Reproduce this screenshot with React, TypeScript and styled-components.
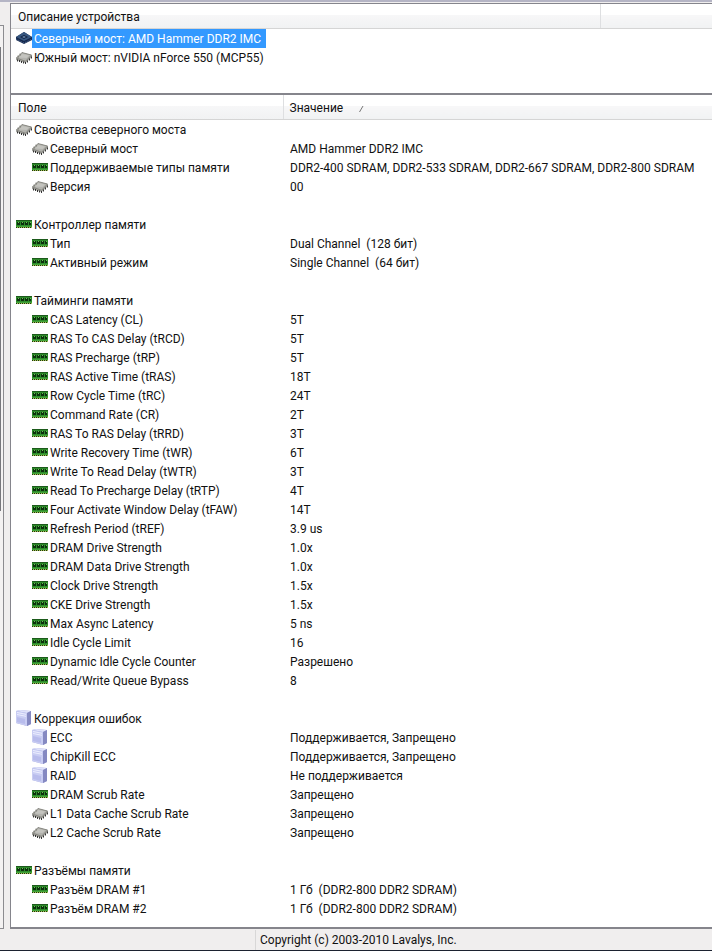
import React from 'react';
import styled, { createGlobalStyle } from 'styled-components';

type IconKind = 'chip' | 'ram' | 'server' | 'cpu';

const GlobalStyle = createGlobalStyle`
  html, body, #root { height: 100%; }
  body {
    margin: 0;
    background: #f0eeee;
    color: #111;
    font: 12px/19px Roboto, "Segoe UI", sans-serif;
  }
`;

const Window = styled.div`
  box-sizing: border-box;
  min-height: 100%;
  display: flex;
  flex-direction: column;
  overflow: hidden;
  border-top: 2px solid #b5b5c5;
  border-bottom: 1px solid #1c2230;
`;

const Workspace = styled.div`
  flex: 1;
  display: flex;
  padding-top: 1px;
`;

const TreeEdge = styled.aside`
  box-sizing: border-box;
  flex: none;
  width: 4px;
  margin: 22px 6px 0 0;
  padding-top: 21px;
  border: 1px solid #8c8c90;
  border-left: 0;
  background: #f4f2f2;
`;

const ScrollThumb = styled.div`
  width: 1px;
  height: 464px;
  background: #77777c;
`;

const Panels = styled.main`
  flex: 1;
  min-width: 0;
  display: flex;
  flex-direction: column;
`;

const Panel = styled.section<{ $grow?: boolean }>`
  box-sizing: border-box;
  flex: ${(p) => (p.$grow ? '1 0 auto' : '0 0 auto')};
  min-height: ${(p) => (p.$grow ? '0' : '91px')};
  border: solid #85858c;
  border-width: ${(p) => (p.$grow ? '1px 0 2px 1px' : '1px 0 1px 1px')};
  background: #fff;
`;

const Table = styled.table`
  width: 100%;
  border-collapse: collapse;
  table-layout: fixed;
`;

const HeadCell = styled.th<{ $divided?: boolean }>`
  height: 24px;
  padding: 3px 6px 0 ${(p) => (p.$divided ? 6 : 7)}px;
  box-sizing: border-box;
  border-bottom: 1px solid #d5d5d5;
  border-left: ${(p) => (p.$divided ? '1px solid #dedfe1' : '0')};
  background: linear-gradient(#fff 45%, #f7f7f8 45%, #f1f2f3);
  font-weight: 400;
  text-align: left;
  white-space: nowrap;
`;

const Cell = styled.td<{ $level?: number }>`
  height: 19px;
  padding: 0 0 0 ${(p) => (p.$level === undefined ? 7 : p.$level * 16 + 5)}px;
  white-space: nowrap;
`;

const Label = styled.span`
  display: flex;
  align-items: center;
  gap: 2px;
`;

const Caption = styled.span`
  display: block;
  padding-top: 2px;
  line-height: 17px;
`;

const DeviceList = styled.ul`
  margin: 0;
  padding: 0 0 0 5px;
  list-style: none;
`;

const DeviceButton = styled.button<{ $selected?: boolean }>`
  display: flex;
  align-items: center;
  height: 19px;
  padding: 0;
  border: 0;
  background: none;
  font: inherit;
  white-space: nowrap;
  color: ${(p) => (p.$selected ? '#fff' : 'inherit')};

  ${Caption} {
    padding-right: 5px;
    padding-left: 2px;
    background: ${(p) => (p.$selected ? '#3399ff' : 'none')};
  }
`;

const SortMark = styled.svg`
  margin-left: 16px;
  vertical-align: middle;
`;

const StatusBar = styled.footer`
  display: flex;
  height: 20px;
  padding-top: 1px;
`;

const StatusText = styled.div`
  margin-left: 255px;
  padding: 2px 0 0 4px;
  border-left: 1px solid #d8d7d7;
  line-height: 17px;
`;

const IconSvg = styled.svg`
  flex: none;
  display: block;
`;

function Icon({ kind }: { kind: IconKind }) {
  return (
    <IconSvg width="16" height="16" viewBox="0 0 16 16" aria-hidden="true">
      {kind === 'chip' && (
        <>
          <path d="M0 9 6 3.500 16 6v2L9.500 14 0 11Z" fill="#a3a39e" />
          <path d="M.5 9 6 3.500 15.500 6 9.500 12.300Z" fill="#b3b3ae" stroke="#75756f" strokeWidth=".7" />
          <path d="m3 8.500 3.500-3.500 6.500 1.500-2.500 2.500Z" fill="#c4c4bf" />
          <path d="M1.500 10.500v2M3.500 11v2M5.500 12v2M7.500 12.500v2M9.500 13v2M11.500 11.500v2M13.500 9.500v2M15.500 7.500v2" stroke="#222" strokeWidth=".9" />
          <path d="M1.500 7 3 8.400M3.500 5l1.500 1.400" stroke="#55554f" strokeWidth=".6" />
        </>
      )}
      {kind === 'ram' && (
        <>
          <path d="M0 4h16v8H0Z" fill="#2c8a29" />
          <path d="M0 4.500h16" stroke="#1c5a1b" />
          <path d="M1 6h3v3H1zM5 6h3v3H5zM9 6h3v3H9zM13 6h2v3h-2z" fill="#0b300d" />
          <path d="M2 6.500h1M6 6.500h1M10 6.500h1M14 6.500h1" stroke="#6fc05a" />
          <path d="M0 10.500h16" stroke="#43a53a" />
          <path d="M0 11.500h16" stroke="#143d10" />
          <path d="M1 11.500h15" stroke="#b0bd55" strokeDasharray="1 1" />
        </>
      )}
      {kind === 'server' && (
        <>
          <path d="m0 1 4-1 11 1v13l-4 2-11-3Z" fill="#a6aadc" />
          <path d="m0 1 4-1 11 1-4 2Z" fill="#dfe2fb" />
          <path d="m0 1 11 2v13L0 13Z" fill="#c9cdf3" />
          <path d="m11 3 4-2v13l-4 2Z" fill="#8589c2" />
          <path d="m1 2.500 9 1.800M1 4.500l9 1.800" stroke="#eceeff" />
          <path d="M1 7l8 2v5L1 12Z" fill="#b8bcec" />
        </>
      )}
      {kind === 'cpu' && (
        <>
          <path d="m0 7 8-5 8 5v3l-8 4-8-4Z" fill="#14264a" />
          <path d="m0 7 8-5 8 5-8 4Z" fill="#36567f" />
          <path d="m4 7 4-2 4 2-4 2Z" fill="#10203f" />
          <path d="m6 7 2-1 2 1-2 1Z" fill="#6a8bb3" />
          <path d="m0 9 8 4 8-4" fill="none" stroke="#51709b" strokeDasharray="1 1" />
        </>
      )}
    </IconSvg>
  );
}

type Row = [number, IconKind, string, string?] | null;

const rows: Row[] = [
  [0, 'chip', 'Свойства северного моста'],
  [1, 'chip', 'Северный мост', 'AMD Hammer DDR2 IMC'],
  [1, 'ram', 'Поддерживаемые типы памяти', 'DDR2-400 SDRAM, DDR2-533 SDRAM, DDR2-667 SDRAM, DDR2-800 SDRAM'],
  [1, 'chip', 'Версия', '00'],
  null,
  [0, 'ram', 'Контроллер памяти'],
  [1, 'ram', 'Тип', 'Dual Channel\u00a0 (128 бит)'],
  [1, 'ram', 'Активный режим', 'Single Channel\u00a0 (64 бит)'],
  null,
  [0, 'ram', 'Тайминги памяти'],
  [1, 'ram', 'CAS Latency (CL)', '5T'],
  [1, 'ram', 'RAS To CAS Delay (tRCD)', '5T'],
  [1, 'ram', 'RAS Precharge (tRP)', '5T'],
  [1, 'ram', 'RAS Active Time (tRAS)', '18T'],
  [1, 'ram', 'Row Cycle Time (tRC)', '24T'],
  [1, 'ram', 'Command Rate (CR)', '2T'],
  [1, 'ram', 'RAS To RAS Delay (tRRD)', '3T'],
  [1, 'ram', 'Write Recovery Time (tWR)', '6T'],
  [1, 'ram', 'Write To Read Delay (tWTR)', '3T'],
  [1, 'ram', 'Read To Precharge Delay (tRTP)', '4T'],
  [1, 'ram', 'Four Activate Window Delay (tFAW)', '14T'],
  [1, 'ram', 'Refresh Period (tREF)', '3.9 us'],
  [1, 'ram', 'DRAM Drive Strength', '1.0x'],
  [1, 'ram', 'DRAM Data Drive Strength', '1.0x'],
  [1, 'ram', 'Clock Drive Strength', '1.5x'],
  [1, 'ram', 'CKE Drive Strength', '1.5x'],
  [1, 'ram', 'Max Async Latency', '5 ns'],
  [1, 'ram', 'Idle Cycle Limit', '16'],
  [1, 'ram', 'Dynamic Idle Cycle Counter', 'Разрешено'],
  [1, 'ram', 'Read/Write Queue Bypass', '8'],
  null,
  [0, 'server', 'Коррекция ошибок'],
  [1, 'server', 'ECC', 'Поддерживается, Запрещено'],
  [1, 'server', 'ChipKill ECC', 'Поддерживается, Запрещено'],
  [1, 'server', 'RAID', 'Не поддерживается'],
  [1, 'ram', 'DRAM Scrub Rate', 'Запрещено'],
  [1, 'chip', 'L1 Data Cache Scrub Rate', 'Запрещено'],
  [1, 'chip', 'L2 Cache Scrub Rate', 'Запрещено'],
  null,
  [0, 'ram', 'Разъёмы памяти'],
  [1, 'ram', 'Разъём DRAM #1', '1 Гб\u00a0 (DDR2-800 DDR2 SDRAM)'],
  [1, 'ram', 'Разъём DRAM #2', '1 Гб\u00a0 (DDR2-800 DDR2 SDRAM)'],
];

const FieldCol = styled.col`
  width: 272px;
`;

const DeviceCol = styled.col`
  width: 589px;
`;

export default function App() {
  return (
    <Window>
      <GlobalStyle />
      <Workspace>
        <TreeEdge>
          <ScrollThumb />
        </TreeEdge>
        <Panels>
          <Panel>
            <Table>
              <colgroup>
                <DeviceCol />
                <col />
              </colgroup>
              <thead>
                <tr>
                  <HeadCell>Описание устройства</HeadCell>
                  <HeadCell $divided />
                </tr>
              </thead>
            </Table>
            <DeviceList>
              <li>
                <DeviceButton $selected>
                  <Icon kind="cpu" />
                  <Caption>Северный мост: AMD Hammer DDR2 IMC</Caption>
                </DeviceButton>
              </li>
              <li>
                <DeviceButton>
                  <Icon kind="chip" />
                  <Caption>Южный мост: nVIDIA nForce 550 (MCP55)</Caption>
                </DeviceButton>
              </li>
            </DeviceList>
          </Panel>
          <Panel $grow>
            <Table>
              <colgroup>
                <FieldCol />
                <col />
              </colgroup>
              <thead>
                <tr>
                  <HeadCell>Поле</HeadCell>
                  <HeadCell $divided>
                    Значение
                    <SortMark width="5" height="6" viewBox="0 0 5 6" aria-hidden="true">
                      <path d="M.5 6 4 0" stroke="#777" />
                    </SortMark>
                  </HeadCell>
                </tr>
              </thead>
              <tbody>
                {rows.map((row, i) =>
                  row ? (
                    <tr key={i}>
                      <Cell $level={row[0]}>
                        <Label>
                          <Icon kind={row[1]} />
                          <Caption>{row[2]}</Caption>
                        </Label>
                      </Cell>
                      <Cell>
                        <Caption>{row[3]}</Caption>
                      </Cell>
                    </tr>
                  ) : (
                    <tr key={i}>
                      <Cell colSpan={2} />
                    </tr>
                  ),
                )}
              </tbody>
            </Table>
          </Panel>
        </Panels>
      </Workspace>
      <StatusBar>
        <StatusText>Copyright (c) 2003-2010 Lavalys, Inc.</StatusText>
      </StatusBar>
    </Window>
  );
}
